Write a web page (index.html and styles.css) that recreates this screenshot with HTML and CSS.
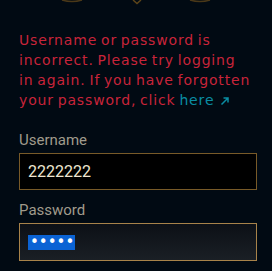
FILE: index.html
```html
<!DOCTYPE html>
<html>
<head>
<meta charset="utf-8">
<link rel="stylesheet" href="styles.css">
</head>
<body>
<div class="deco">
<svg width="272" height="6" viewBox="0 0 272 6">
<path d="M62 0 Q72 3 82 0" stroke="#4a3818" stroke-width="1.5" fill="none"/>
<path d="M133 0 L137 3.5 L141 0" stroke="#5c4419" stroke-width="1.5" fill="none"/>
<path d="M190 0 Q200 3 210 0" stroke="#4a3818" stroke-width="1.5" fill="none"/>
</svg>
</div>
<div class="panel">
<p class="error">Username or password is<br>incorrect. Please try logging<br>in again. If you have forgotten<br>your password, click <a class="link" href="#">here <svg class="arrow" width="10" height="10" viewBox="0 0 10 10"><path d="M1.5 8.5 L8 2 M3.5 2 H8 V6.5" stroke="currentColor" stroke-width="1.5" fill="none"/></svg></a></p>
<div class="field first">
<label class="label">Username</label>
<div class="input">2222222</div>
</div>
<div class="field">
<label class="label">Password</label>
<div class="input focused"><span class="sel">•••••</span></div>
</div>
</div>
</body>
</html>
```
FILE: styles.css
```css
html, body {
  margin: 0;
  padding: 0;
  background: #010a13;
  width: 272px;
  height: 271px;
  overflow: hidden;
}
.deco {
  height: 30px;
  line-height: 0;
}
.panel {
  padding: 0 15px 0 19px;
  display: flex;
  flex-direction: column;
}
.error {
  margin: 0;
  font-family: "DejaVu Sans", sans-serif;
  font-size: 14px;
  line-height: 20px;
  letter-spacing: 0.85px;
  word-spacing: -1.5px;
  white-space: nowrap;
  color: #c8243a;
}
.link {
  color: #0a8ea3;
  text-decoration: none;
}
.arrow {
  vertical-align: -1px;
  margin-left: 2px;
}
.field {
  display: flex;
  flex-direction: column;
  margin-top: 11px;
}
.field.first {
  margin-top: 21px;
}
.label {
  font-family: "Roboto", sans-serif;
  font-size: 15px;
  line-height: 18px;
  color: #a09b8c;
  margin-bottom: 4px;
}
.input {
  box-sizing: border-box;
  width: 238px;
  height: 37px;
  border: 1px solid #785a28;
  background: #000;
  color: #f0e6d2;
  font-family: "Roboto", sans-serif;
  font-size: 16px;
  display: flex;
  align-items: center;
  padding-left: 8px;
}
.focused {
  height: 38px;
  border-color: #a8834a;
  background: linear-gradient(to bottom, #0c1016, #1a1f25);
}
.sel {
  background: #0b63d4;
  color: #fff;
  font-family: "DejaVu Sans", sans-serif;
  font-size: 15px;
  letter-spacing: 0;
  line-height: 15px;
  height: 15px;
  padding: 0 1px 0 2px;
  display: inline-flex;
  align-items: center;
}
```
